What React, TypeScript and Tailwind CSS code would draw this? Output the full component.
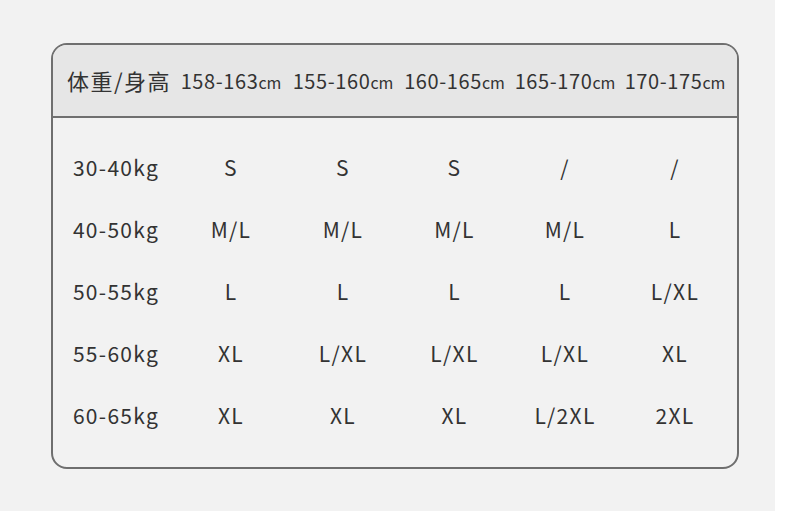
const heights = ["158-163", "155-160", "160-165", "165-170", "170-175"]

const rows = [
  { weight: "30-40kg", sizes: ["S", "S", "S", "/", "/"] },
  { weight: "40-50kg", sizes: ["M/L", "M/L", "M/L", "M/L", "L"] },
  { weight: "50-55kg", sizes: ["L", "L", "L", "L", "L/XL"] },
  { weight: "55-60kg", sizes: ["XL", "L/XL", "L/XL", "L/XL", "XL"] },
  { weight: "60-65kg", sizes: ["XL", "XL", "XL", "L/2XL", "2XL"] },
]

export default function App() {
  return (
    <div
      className="w-[790px] h-[511px] bg-white flex text-[#333333]"
      style={{ fontFamily: '"Noto Sans CJK SC", "Noto Sans", sans-serif' }}
    >
      <div className="w-[775px] h-full bg-[#f2f2f2] pl-[51px] pt-[43px]">
        {/* Size table */}
        <div className="w-[688px] h-[426px] border-2 border-[#6f6f6f] rounded-[16px] overflow-hidden flex flex-col">
          <div className="h-[73px] bg-[#e6e6e6] border-b-2 border-[#6f6f6f] grid grid-cols-[112px_112px_112px_111px_110px_110px] pl-[10px] items-center">
            <div className="text-center text-[22px] tracking-[1.5px] whitespace-nowrap">体重/身高</div>
            {heights.map((h) => (
              <div key={h} className="text-center text-[20px] tracking-[0.6px] whitespace-nowrap">
                {h}
                <span className="text-[16px] tracking-normal">cm</span>
              </div>
            ))}
          </div>
          <div className="flex-1 pt-[19px] pl-[10px]">
            {rows.map((r) => (
              <div
                key={r.weight}
                className="h-[62px] grid grid-cols-[112px_112px_112px_111px_110px_110px] items-center text-[21px] tracking-[1.3px]"
              >
                <div className="text-center pr-[6px]">{r.weight}</div>
                {r.sizes.map((s, i) => (
                  <div key={i} className="text-center">
                    {s}
                  </div>
                ))}
              </div>
            ))}
          </div>
        </div>
      </div>
    </div>
  )
}
